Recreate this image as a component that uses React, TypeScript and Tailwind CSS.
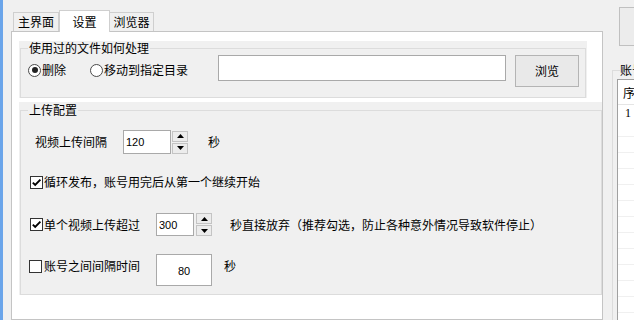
import React from "react";

// small arrow used by the spin buttons
const Arrow = ({ down }: { down?: boolean }) => (
  <svg width="7" height="4" viewBox="0 0 7 4">
    <path d={down ? "M0 0h7L3.5 4z" : "M3.5 0L7 4H0z"} fill="#000" />
  </svg>
);

const SpinButtons = () => (
  <div className="flex flex-col gap-[1px]">
    <div className="flex h-[11px] w-[16px] items-center justify-center border border-[#c4c4c4] bg-[#ececec]">
      <Arrow />
    </div>
    <div className="flex h-[11px] w-[16px] items-center justify-center border border-[#c4c4c4] bg-[#ececec]">
      <Arrow down />
    </div>
  </div>
);

const Radio = ({ checked, label, width }: { checked?: boolean; label: string; width: string }) => (
  <div className={`flex items-center gap-[1px] ${width}`}>
    <div className="flex h-[13px] w-[13px] items-center justify-center rounded-full border border-[#4a4a4a] bg-white">
      {checked && <div className="h-[6px] w-[6px] rounded-full bg-[#222]" />}
    </div>
    <span>{label}</span>
  </div>
);

const Check = ({ checked }: { checked?: boolean }) => (
  <div className="flex h-[13px] w-[13px] shrink-0 items-center justify-center border border-[#333] bg-white">
    {checked && (
      <svg width="11" height="11" viewBox="0 0 11 11">
        <path d="M1.8 5.6l2.4 2.4L9.4 2.6" stroke="#000" strokeWidth="1.9" fill="none" />
      </svg>
    )}
  </div>
);

export default function App() {
  const rows = Array.from({ length: 12 });

  return (
    <div className="flex h-[320px] w-[634px] overflow-hidden bg-[#f0f0f0] text-[12px] leading-[14px] text-black font-['Noto_Sans_CJK_SC',sans-serif]">
      <div className="w-[3px] shrink-0 bg-[#6ba5ea]" />

      {/* tab control */}
      <div className="ml-[8px] flex w-[592px] shrink-0 flex-col pt-[10px]">
        <div className="relative z-10 flex h-[21px] items-end pl-[2px]">
          <div className="flex h-[19px] w-[46px] items-center justify-center border border-b-0 border-[#cfcfcf] bg-[#f0f0f0]">
            主界面
          </div>
          <div className="-mb-px flex h-[22px] w-[51px] items-center justify-center border border-b-0 border-[#cfcfcf] bg-white">
            设置
          </div>
          <div className="flex h-[19px] w-[44px] items-center justify-center border border-b-0 border-l-0 border-[#cfcfcf] bg-[#f0f0f0]">
            浏览器
          </div>
        </div>

        <div className="flex-1 border border-[#c4c4c4] bg-white pl-[7px] pt-[9px]">
          {/* group 1 */}
          <div className="h-[57px] w-[568px] bg-[#f0f0f0] px-[1px]">
            <fieldset className="h-[57px] border border-[#dcdcdc]">
              <legend className="ml-[7px] px-[1px] leading-[14px]">使用过的文件如何处理</legend>
              <div className="flex items-start pl-[7px]">
                <div className="mt-[8px] flex">
                  <Radio checked label="删除" width="w-[62px]" />
                  <Radio label="移动到指定目录" width="w-[128px]" />
                </div>
                <div className="h-[26px] w-[288px] border border-[#a9a9a9] bg-white" />
                <button className="ml-[9px] flex h-[32px] w-[64px] items-center justify-center border border-[#b4b4b4] bg-[#e9e9e9]">
                  浏览
                </button>
              </div>
            </fieldset>
          </div>

          {/* group 2 */}
          <div className="mt-[4px] h-[193px] w-[583px] bg-[#f0f0f0] pl-[1px] pt-[1px]">
            <fieldset className="h-[192px] border border-[#dcdcdc]">
              <legend className="ml-[7px] px-[1px] leading-[14px]">上传配置</legend>
              <div className="flex flex-col">
                <div className="mt-[13px] flex h-[24px] items-center">
                  <span className="ml-[14px] w-[72px]">视频上传间隔</span>
                  <div className="ml-[16px] flex h-[24px] w-[48px] items-center border border-[#a9a9a9] bg-white pl-[2px] text-[11px] font-['Liberation_Sans',sans-serif]">
                    120
                  </div>
                  <div className="ml-[1px]">
                    <SpinButtons />
                  </div>
                  <span className="ml-[20px]">秒</span>
                </div>

                <div className="mt-[20px] flex h-[16px] items-center pl-[9px]">
                  <Check checked />
                  <span className="ml-[1px]">循环发布，账号用完后从第一个继续开始</span>
                </div>

                <div className="mt-[23px] flex h-[23px] items-center pl-[9px]">
                  <Check checked />
                  <span className="ml-[1px] w-[96px]">单个视频上传超过</span>
                  <div className="ml-[16px] flex h-[23px] w-[38px] items-center border border-[#a9a9a9] bg-white pl-[2px] text-[11px] font-['Liberation_Sans',sans-serif]">
                    300
                  </div>
                  <div className="ml-[2px]">
                    <SpinButtons />
                  </div>
                  <span className="ml-[18px]">秒直接放弃（推荐勾选，防止各种意外情况导致软件停止）</span>
                </div>

                <div className="mt-[18px] flex h-[32px] items-start pl-[8px]">
                  <div className="mt-[5px] flex items-center">
                    <Check />
                    <span className="ml-[2px] w-[96px]">账号之间间隔时间</span>
                  </div>
                  <div className="ml-[16px] flex h-[32px] w-[56px] items-center justify-center border border-[#a9a9a9] bg-white pt-[2px] text-[11px] font-['Liberation_Sans',sans-serif]">
                    80
                  </div>
                  <span className="ml-[12px] mt-[5px]">秒</span>
                </div>
              </div>
            </fieldset>
          </div>
        </div>
      </div>

      {/* right column, clipped */}
      <div className="flex w-[31px] shrink-0 flex-col overflow-hidden">
        <div className="ml-[16px] mt-[7px] h-[39px] w-[40px] shrink-0 border border-[#c0c0c0] bg-[#ececec]" />
        <fieldset className="ml-[9px] mt-[17px] h-[300px] w-[80px] shrink-0 border border-[#dcdcdc]">
          <legend className="ml-[7px] whitespace-nowrap leading-[14px]">账号列表</legend>
          <div className="ml-[4px] mt-[2px] h-[260px] w-[70px] border border-[#a0a0a0] bg-white">
            <div className="h-[25px] border-b border-[#e5e5e5] pl-[5px] pt-[6px]">序号</div>
            <div className="h-[32px] border-b border-[#f0f0f0] pl-[7px] leading-[16px] font-['Liberation_Serif',serif]">1</div>
            {rows.map((_, i) => (
              <div key={i} className="h-[16px] border-b border-[#f0f0f0]" />
            ))}
          </div>
        </fieldset>
      </div>
    </div>
  );
}
